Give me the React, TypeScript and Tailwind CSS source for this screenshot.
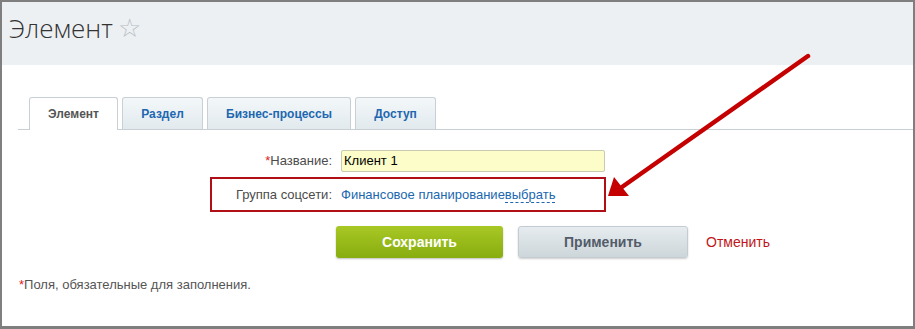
import React from "react";

const tabs = [
  { label: "Элемент", active: true, w: "w-[89px]" },
  { label: "Раздел", active: false, w: "w-[81px]" },
  { label: "Бизнес-процессы", active: false, w: "w-[144px]" },
  { label: "Доступ", active: false, w: "w-[81px]" },
];

function Arrow() {
  return (
    <svg className="absolute left-0 top-0 pointer-events-none" width="915" height="329" viewBox="0 0 915 329">
      <line x1="806" y1="54" x2="620" y2="185" stroke="#c40000" strokeWidth="4.5" strokeLinecap="round" />
      <polygon points="606,194 612,175 627,194" fill="#c40000" />
    </svg>
  );
}

export default function App() {
  return (
    <div
      className="relative w-[915px] h-[329px] overflow-hidden border-x-2 border-t-2 border-b-[3px] border-[#7f7f7f] bg-white"
      style={{ fontFamily: '"Liberation Sans", Arial, sans-serif' }}
    >
      <div className="h-[63px] bg-[#edf0f3] flex items-center pl-[7px] pb-[12px]">
        <h1 className="text-[26px] font-light text-[#333] font-['Open_Sans',sans-serif] leading-none">Элемент</h1>
        <span className="ml-[5px] text-[26px] text-[#b8bfc5] leading-none">☆</span>
      </div>

      <div className="pt-[32px] pl-[16px]">
        <div className="flex items-end gap-[4px] border-b border-[#c8d0d5] pl-[11px] h-[33px]">
          {tabs.map((t) =>
            t.active ? (
              <div
                key={t.label}
                className={`${t.w} h-[33px] -mb-px flex items-center justify-center rounded-t-[3px] border border-b-0 border-[#c8d0d5] bg-white text-[12px] font-bold text-[#555]`}
              >
                {t.label}
              </div>
            ) : (
              <div
                key={t.label}
                className={`${t.w} h-[32px] flex items-center justify-center rounded-t-[3px] border border-b-0 border-[#c8d0d5] bg-gradient-to-b from-[#f3f7f9] to-[#e2eaee] text-[12px] font-bold text-[#2067b0]`}
              >
                {t.label}
              </div>
            )
          )}
        </div>
      </div>

      <div className="mt-[20px] flex flex-col">
        <div className="flex items-center h-[22px]">
          <div className="w-[330px] text-right text-[13px] text-[#4b4b4b]">
            <span className="text-[#e02020]">*</span>Название:
          </div>
          <div className="ml-[9px] w-[264px] h-[22px] border border-[#c9cbb0] bg-[#fcfdc8] rounded-[2px] text-[13px] text-[#000] pl-[2px] flex items-center">
            Клиент 1
          </div>
        </div>

        <div className="mt-[5px] ml-[208px] w-[396px] h-[35px] border-2 border-[#b10f16] flex items-center">
          <div className="w-[120px] text-right text-[13px] text-[#4b4b4b]">Группа соцсети:</div>
          <div className="ml-[9px] text-[13px] text-[#2067b0]">
            Финансовое планирование
            <span className="border-b border-dashed border-[#2067b0]">выбрать</span>
          </div>
        </div>

        <div className="mt-[14px] flex items-center pl-[334px]">
          <button className="w-[167px] h-[32px] rounded-[3px] bg-gradient-to-b from-[#a8c824] to-[#88ad0e] text-white text-[14px] font-bold shadow-[0_1px_2px_rgba(0,0,0,0.25)]">
            Сохранить
          </button>
          <button className="ml-[15px] w-[170px] h-[32px] rounded-[3px] border border-[#c3cdd1] bg-gradient-to-b from-[#e6ecef] to-[#cdd6da] text-[#535c69] text-[14px] font-bold shadow-[0_1px_2px_rgba(0,0,0,0.2)]">
            Применить
          </button>
          <span className="ml-[18px] text-[14px] text-[#c0161a]">Отменить</span>
        </div>

        <div className="mt-[17px] pl-[17px] text-[13px] text-[#555]">
          <span className="text-[#e02020]">*</span>Поля, обязательные для заполнения.
        </div>
      </div>

      <Arrow />
    </div>
  );
}
